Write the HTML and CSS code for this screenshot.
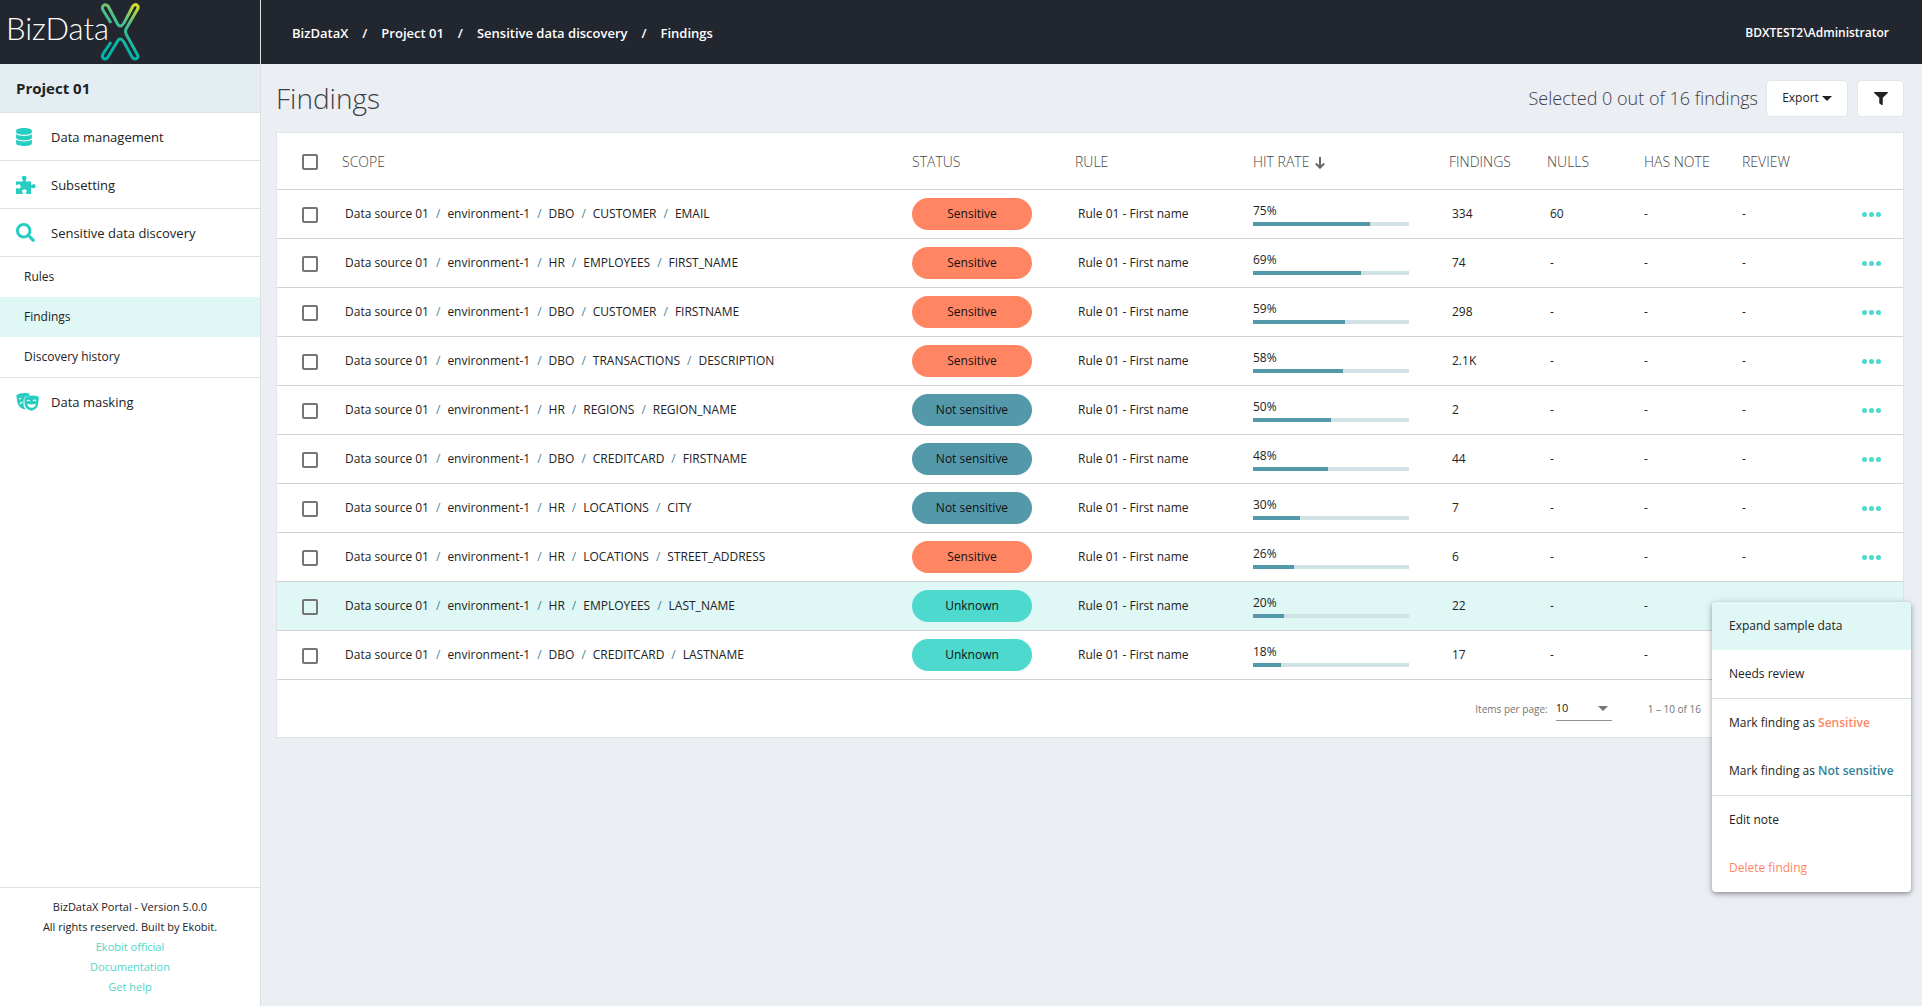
FILE: index.html
```html
<!DOCTYPE html>
<html lang="en">
<head>
<meta charset="utf-8">
<meta name="viewport" content="width=device-width, initial-scale=1">
<title>Findings - BizDataX</title>
<link rel="stylesheet" href="styles.css">
</head>
<body>
<svg class="sprite" aria-hidden="true">
  <symbol id="dots" viewBox="0 0 19 5"><circle cx="2.5" cy="2.5" r="2.5"/><circle cx="9.5" cy="2.5" r="2.5"/><circle cx="16.5" cy="2.5" r="2.5"/></symbol>
  <symbol id="caret" viewBox="0 0 10 5"><path d="M0 0h10L5 5z"/></symbol>
</svg>

<aside class="sidebar">
  <a class="logo" href="#" aria-label="BizDataX home">
    <svg width="150" height="64" viewBox="0 0 150 64">
      <defs><linearGradient id="x-fill" gradientUnits="userSpaceOnUse" x1="37" y1="5" x2="14" y2="45"><stop offset="0" stop-color="#d9e021"/><stop offset=".45" stop-color="#4fbf8b"/><stop offset="1" stop-color="#00b5a9"/></linearGradient></defs>
      <text class="logo-text" x="6" y="40">BizData</text>
      <path transform="translate(100 0)" d="M11 23L3 10C1 6 5 3 8 6L17 23Q20 29 24 23L33 6C36 3 40 6 37 10L26 29Q25 31 26 34L37 54C40 58 35 61 32 57L24 42Q20 36 17 42L8 57C5 61 1 58 3 54L11 42" fill="none" stroke="url(#x-fill)" stroke-width="3"/>
    </svg>
  </a>
  <h2 class="project">Project 01</h2>
  <nav class="nav">
    <a class="nav-item" href="#"><svg height="18" width="16" viewBox="0 0 448 512"><path d="M448 73.143v45.714C448 159.143 347.667 192 224 192S0 159.143 0 118.857V73.143C0 32.857 100.333 0 224 0s224 32.857 224 73.143zM448 176v102.857C448 319.143 347.667 352 224 352S0 319.143 0 278.857V176c48.125 33.143 136.208 48.572 224 48.572S399.874 209.143 448 176zm0 160v102.857C448 479.143 347.667 512 224 512S0 479.143 0 438.857V336c48.125 33.143 136.208 48.572 224 48.572S399.874 369.143 448 336z"/></svg>Data management</a>
    <a class="nav-item" href="#"><svg height="18" width="20" viewBox="0 0 20 18"><path d="M0 5.500H6.200Q7.600 5.300 6.900 4.100C4.800 1.500 6 0 8.200 0S11.500 1.600 9.900 3.900Q9 5.300 10.500 5.500H15V8.600Q15.300 9.800 16.300 8.800C18 7.300 19.500 8.200 19.500 10.200S18 13 16.300 11.800Q15.200 11.200 15 12.300V18H10.600Q9.600 17.600 10.100 16.500C11.500 14.600 10.400 13.500 8.400 13.500S5.200 14.700 6.700 16.500Q7.300 17.700 6.200 18H0V12.700Q.4 11.700 1.500 12.300C3.300 13.500 4.700 12.200 4.700 10.500S3.300 7.600 1.500 8.800Q.3 9.600 0 8.600z"/></svg>Subsetting</a>
    <a class="nav-item" href="#"><svg height="19" width="19" viewBox="0 0 512 512"><path d="M505 442.7L405.3 343c-4.5-4.5-10.6-7-17-7H372c27.6-35.3 44-79.7 44-128C416 93.1 322.9 0 208 0S0 93.1 0 208s93.1 208 208 208c48.3 0 92.7-16.4 128-44v16.3c0 6.4 2.5 12.5 7 17l99.7 99.7c9.4 9.4 24.6 9.4 33.9 0l28.3-28.3c9.4-9.4 9.4-24.6.1-34zM208 336c-70.7 0-128-57.2-128-128 0-70.7 57.2-128 128-128 70.7 0 128 57.2 128 128 0 70.7-57.2 128-128 128z"/></svg>Sensitive data discovery</a>
    <div class="subnav">
      <a href="#">Rules</a>
      <a class="active" href="#" aria-current="page">Findings</a>
      <a href="#">Discovery history</a>
    </div>
    <a class="nav-item" href="#"><svg height="18" width="23" viewBox="0 0 23 18"><path d="M.3 2.200C3 .4 8-.6 12.800 .5Q13.600 .8 13.600 3L12 3.200Q8.500 3.400 7.900 5.200L7.400 10.500Q7.300 14 9.800 16.300C5 16.300 1.800 12.500 1.200 8.500Z"/><path d="M9 4.600Q15.500 1 22.200 3.600Q22.900 4 22.800 5L22 11.500C21.300 15.200 18.500 17.300 15.700 17.800C12.500 17.300 9.300 15.200 8.600 11.500L8.400 5.600Q8.400 5 9 4.600Z"/><g fill="none" stroke="#fff"><path d="M3.200 6.300l2-1.300M4 11.200q.8-1.900 2.600-2M11 8.200q1.200-1.700 2.800-.4M17 7.800q1.400-1.500 2.800 .2" stroke-width="1.200"/></g><path d="M11.200 10.800q4.400 1.600 8.800 0q-.9 3.900-4.400 3.900t-4.400-3.900z" fill="#fff"/></svg>Data masking</a>
  </nav>
  <footer class="about">
    <p>BizDataX Portal - Version 5.0.0</p>
    <p>All rights reserved. Built by Ekobit.</p>
    <a href="#">Ekobit official</a>
    <a href="#">Documentation</a>
    <a href="#">Get help</a>
  </footer>
</aside>

<div class="page">
  <header class="topbar">
    <nav class="crumbs" aria-label="Breadcrumb"><a href="#">BizDataX</a><i>/</i><a href="#">Project 01</a><i>/</i><a href="#">Sensitive data discovery</a><i>/</i><a href="#">Findings</a></nav>
    <span class="user">BDXTEST2\Administrator</span>
  </header>
  <main class="main">
    <div class="toolbar">
      <h1>Findings</h1>
      <span class="selected">Selected 0 out of 16 findings</span>
      <button class="btn export" type="button">Export<svg width="10" height="5"><use href="#caret"/></svg></button>
      <button class="btn filter" type="button" aria-label="Filter"><svg width="14" height="13" viewBox="0 0 512 512" preserveAspectRatio="none"><path d="M487.976 0H24.028C2.71 0-8.047 25.866 7.058 40.971L192 225.941V432c0 7.831 3.821 15.170 10.237 19.662l80 55.980C298.020 518.690 320 507.493 320 487.980V225.941l184.947-184.970C520.021 25.896 509.338 0 487.976 0z"/></svg></button>
    </div>
    <section class="card">
      <table class="grid">
        <colgroup><col class="c-check"><col><col class="c-status"><col class="c-rule"><col class="c-rate"><col class="c-num"><col class="c-nulls"><col class="c-num"><col class="c-num"><col class="c-act"></colgroup>
        <thead><tr><th><input type="checkbox" aria-label="Select all"></th><th>SCOPE</th><th>STATUS</th><th>RULE</th><th>HIT RATE <svg width="10" height="12" viewBox="0 0 10 12"><path d="M5 0v10.500M.8 6.500L5 10.700l4.200-4.200" fill="none" stroke="#666" stroke-width="2"/></svg></th><th>FINDINGS</th><th>NULLS</th><th>HAS NOTE</th><th>REVIEW</th><th></th></tr></thead>
        <tbody>
          <tr><td><input type="checkbox" aria-label="Select row"></td><td class="in">Data source 01<i>/</i>environment-1<i>/</i>DBO<i>/</i>CUSTOMER<i>/</i>EMAIL</td><td><span class="pill sensitive">Sensitive</span></td><td class="in">Rule 01 - First name</td><td><div class="rate">75%<div class="bar"><div style="width:75%"></div></div></div></td><td class="in">334</td><td class="in">60</td><td>-</td><td>-</td><td><button class="more" type="button" aria-label="Actions"><svg width="19" height="5"><use href="#dots"/></svg></button></td></tr>
          <tr><td><input type="checkbox" aria-label="Select row"></td><td class="in">Data source 01<i>/</i>environment-1<i>/</i>HR<i>/</i>EMPLOYEES<i>/</i>FIRST_NAME</td><td><span class="pill sensitive">Sensitive</span></td><td class="in">Rule 01 - First name</td><td><div class="rate">69%<div class="bar"><div style="width:69%"></div></div></div></td><td class="in">74</td><td class="in">-</td><td>-</td><td>-</td><td><button class="more" type="button" aria-label="Actions"><svg width="19" height="5"><use href="#dots"/></svg></button></td></tr>
          <tr><td><input type="checkbox" aria-label="Select row"></td><td class="in">Data source 01<i>/</i>environment-1<i>/</i>DBO<i>/</i>CUSTOMER<i>/</i>FIRSTNAME</td><td><span class="pill sensitive">Sensitive</span></td><td class="in">Rule 01 - First name</td><td><div class="rate">59%<div class="bar"><div style="width:59%"></div></div></div></td><td class="in">298</td><td class="in">-</td><td>-</td><td>-</td><td><button class="more" type="button" aria-label="Actions"><svg width="19" height="5"><use href="#dots"/></svg></button></td></tr>
          <tr><td><input type="checkbox" aria-label="Select row"></td><td class="in">Data source 01<i>/</i>environment-1<i>/</i>DBO<i>/</i>TRANSACTIONS<i>/</i>DESCRIPTION</td><td><span class="pill sensitive">Sensitive</span></td><td class="in">Rule 01 - First name</td><td><div class="rate">58%<div class="bar"><div style="width:58%"></div></div></div></td><td class="in">2.1K</td><td class="in">-</td><td>-</td><td>-</td><td><button class="more" type="button" aria-label="Actions"><svg width="19" height="5"><use href="#dots"/></svg></button></td></tr>
          <tr><td><input type="checkbox" aria-label="Select row"></td><td class="in">Data source 01<i>/</i>environment-1<i>/</i>HR<i>/</i>REGIONS<i>/</i>REGION_NAME</td><td><span class="pill safe">Not sensitive</span></td><td class="in">Rule 01 - First name</td><td><div class="rate">50%<div class="bar"><div style="width:50%"></div></div></div></td><td class="in">2</td><td class="in">-</td><td>-</td><td>-</td><td><button class="more" type="button" aria-label="Actions"><svg width="19" height="5"><use href="#dots"/></svg></button></td></tr>
          <tr><td><input type="checkbox" aria-label="Select row"></td><td class="in">Data source 01<i>/</i>environment-1<i>/</i>DBO<i>/</i>CREDITCARD<i>/</i>FIRSTNAME</td><td><span class="pill safe">Not sensitive</span></td><td class="in">Rule 01 - First name</td><td><div class="rate">48%<div class="bar"><div style="width:48%"></div></div></div></td><td class="in">44</td><td class="in">-</td><td>-</td><td>-</td><td><button class="more" type="button" aria-label="Actions"><svg width="19" height="5"><use href="#dots"/></svg></button></td></tr>
          <tr><td><input type="checkbox" aria-label="Select row"></td><td class="in">Data source 01<i>/</i>environment-1<i>/</i>HR<i>/</i>LOCATIONS<i>/</i>CITY</td><td><span class="pill safe">Not sensitive</span></td><td class="in">Rule 01 - First name</td><td><div class="rate">30%<div class="bar"><div style="width:30%"></div></div></div></td><td class="in">7</td><td class="in">-</td><td>-</td><td>-</td><td><button class="more" type="button" aria-label="Actions"><svg width="19" height="5"><use href="#dots"/></svg></button></td></tr>
          <tr><td><input type="checkbox" aria-label="Select row"></td><td class="in">Data source 01<i>/</i>environment-1<i>/</i>HR<i>/</i>LOCATIONS<i>/</i>STREET_ADDRESS</td><td><span class="pill sensitive">Sensitive</span></td><td class="in">Rule 01 - First name</td><td><div class="rate">26%<div class="bar"><div style="width:26%"></div></div></div></td><td class="in">6</td><td class="in">-</td><td>-</td><td>-</td><td><button class="more" type="button" aria-label="Actions"><svg width="19" height="5"><use href="#dots"/></svg></button></td></tr>
          <tr class="current"><td><input type="checkbox" aria-label="Select row"></td><td class="in">Data source 01<i>/</i>environment-1<i>/</i>HR<i>/</i>EMPLOYEES<i>/</i>LAST_NAME</td><td><span class="pill unknown">Unknown</span></td><td class="in">Rule 01 - First name</td><td><div class="rate">20%<div class="bar"><div style="width:20%"></div></div></div></td><td class="in">22</td><td class="in">-</td><td>-</td><td></td><td class="anchor">
            <div class="menu" role="menu">
              <button type="button" role="menuitem" class="active">Expand sample data</button>
              <button type="button" role="menuitem">Needs review</button>
              <hr>
              <button type="button" role="menuitem">Mark finding as <b class="orange">Sensitive</b></button>
              <button type="button" role="menuitem">Mark finding as <b class="blue">Not sensitive</b></button>
              <hr>
              <button type="button" role="menuitem">Edit note</button>
              <button type="button" role="menuitem" class="delete">Delete finding</button>
            </div></td></tr>
          <tr><td><input type="checkbox" aria-label="Select row"></td><td class="in">Data source 01<i>/</i>environment-1<i>/</i>DBO<i>/</i>CREDITCARD<i>/</i>LASTNAME</td><td><span class="pill unknown">Unknown</span></td><td class="in">Rule 01 - First name</td><td><div class="rate">18%<div class="bar"><div style="width:18%"></div></div></div></td><td class="in">17</td><td class="in">-</td><td>-</td><td></td><td></td></tr>
        </tbody>
      </table>
      <div class="pager">
        <label for="size">Items per page:</label>
        <div class="select"><select id="size"><option>10</option><option>25</option><option>50</option></select><svg width="10" height="5"><use href="#caret"/></svg></div>
        <span>1 – 10 of 16</span>
      </div>
    </section>
  </main>
</div>
</body>
</html>
```
FILE: styles.css
```css
* { box-sizing: border-box; }

body {
  display: grid;
  grid-template-columns: 261px minmax(0, 1fr);
  min-height: 100vh;
  margin: 0;
  background: #ebeef3;
  color: #222;
  font: 12px/16px "Open Sans", "Noto Sans", sans-serif;
}

a { color: inherit; text-decoration: none; }
button, select, input { font: inherit; color: inherit; }
h1, h2, p { margin: 0; }
i { font-style: normal; }
.sprite { position: absolute; width: 0; height: 0; }

.sidebar {
  display: flex;
  flex-direction: column;
  background: #fff;
  border-right: 1px solid #dcdfe2;
}
.logo { display: flex; height: 64px; background: #22262f; }
.logo-text { font: 300 31px Lato, sans-serif; fill: #fff; }
.project {
  padding: 0 16px;
  background: #e3edf2;
  border-bottom: 1px solid #dfe1e3;
  font-size: 15px;
  line-height: 48px;
}
.nav { flex: 1; }
.nav-item {
  display: flex;
  align-items: center;
  height: 48px;
  padding-left: 51px;
  border-bottom: 1px solid #dfe1e3;
  font-size: 13px;
}
.nav-item svg { flex: none; margin-left: -35px; fill: #26cdc0; }
.nav-item svg[width="16"] { margin-right: 19px; }
.nav-item svg[width="20"] { margin-right: 15px; }
.nav-item svg[width="19"] { margin-right: 16px; }
.nav-item svg[width="23"] { margin-right: 12px; }
.nav-item:last-child { border-bottom: 0; }
.subnav { border-bottom: 1px solid #dfe1e3; }
.subnav a { display: block; padding-left: 24px; line-height: 40px; }
.subnav .active { background: #dff7f5; }
.about {
  display: flex;
  flex-direction: column;
  align-items: center;
  padding: 9px 0;
  border-top: 1px solid #dfe1e3;
  font-size: 11px;
  line-height: 20px;
}
.about a { color: #4ed5c9; }

.topbar {
  display: flex;
  align-items: center;
  justify-content: space-between;
  height: 64px;
  padding: 2px 33px 0 31px;
  background: #22262f;
  color: #fff;
  font-weight: 600;
}
.crumbs { font-size: 13px; }
.crumbs i { margin: 0 14px; }
.main { padding: 0 18px 16px 15px; }
.toolbar { display: flex; align-items: center; height: 68px; }
h1 { flex: 1; color: #3d4047; font-size: 28px; font-weight: 300; line-height: 40px; }
.selected { margin-right: 8px; color: #3d4047; font-size: 18px; font-weight: 300; line-height: 24px; }
.btn {
  display: flex;
  align-items: center;
  justify-content: center;
  gap: 3px;
  height: 37px;
  padding: 0;
  background: #fff;
  border: 1px solid #e2e5e9;
  border-radius: 4px;
}
.btn svg { fill: #222; }
.export { width: 82px; margin-right: 9px; }
.filter { width: 47px; }

.card { background: #fff; border: 1px solid #e1e4e7; }
.grid { width: 100%; table-layout: fixed; border-spacing: 0; }
.c-check { width: 65px; }
.c-status { width: 163px; }
.c-rule { width: 178px; }
.c-rate { width: 196px; }
.c-num { width: 98px; }
.c-nulls { width: 97px; }
.c-act { width: 63px; }
th, td { height: 49px; padding: 0; border-bottom: 1px solid #d0d2d4; text-align: left; white-space: nowrap; }
th { height: 57px; padding-top: 1px; color: #444; font-size: 14px; font-weight: 300; }
th svg { margin-left: 2px; vertical-align: -2px; }
td.in { padding-left: 3px; }
td i { margin: 0 7px; color: #47879b; }
th:first-child, td:first-child { padding-left: 25px; }
.current td { background: #dff7f5; }

input[type="checkbox"] {
  display: block;
  width: 16px;
  height: 16px;
  margin: 1px 0 0;
  appearance: none;
  background: #fff;
  border: 2px solid #757575;
  border-radius: 2px;
}
.current input[type="checkbox"] { background: transparent; }

.pill { display: block; width: 120px; border-radius: 16px; color: #111; line-height: 32px; text-align: center; }
.sensitive { background: #ff8563; }
.safe { background: #5499aa; }
.unknown { background: #4dd9cd; }
.rate { width: 156px; line-height: 18px; }
.bar { margin-top: 2px; background: #d0e2e6; }
.bar div { height: 4px; background: #5499aa; }
.more { display: block; margin-left: 14px; padding: 8px; background: none; border: 0; }
.more svg { display: block; fill: #4dd9cd; }

.anchor { position: relative; }
.menu {
  position: absolute;
  z-index: 2;
  top: 20px;
  right: -8px;
  width: 199px;
  background: #fff;
  border-radius: 4px;
  box-shadow: 0 2px 4px rgba(0, 0, 0, .3), 0 1px 10px rgba(0, 0, 0, .14);
  overflow: hidden;
}
.menu button {
  display: block;
  width: 100%;
  height: 48px;
  padding: 0 0 0 17px;
  background: none;
  border: 0;
  text-align: left;
}
.menu .active { background: #dff7f5; }
.menu hr { height: 1px; margin: 0; background: #d8dadc; border: 0; }
.menu b { font-weight: 600; }
.menu .orange { color: #ff8563; }
.menu .blue { color: #2f8299; }
.menu .delete { color: #ff8563; font-weight: 500; }

.pager {
  display: flex;
  align-items: center;
  justify-content: flex-end;
  height: 57px;
  padding-right: 202px;
  color: #757575;
  font-size: 10px;
}
.select { position: relative; margin: 0 36px 0 8px; }
.select select {
  display: block;
  width: 56px;
  height: 25px;
  padding: 0;
  appearance: none;
  background: none;
  border: 0;
  border-bottom: 1px solid #8f8f8f;
  border-radius: 0;
  color: #222;
  font-size: 11px;
}
.select svg { position: absolute; top: 10px; right: 4px; fill: #757575; pointer-events: none; }
```
